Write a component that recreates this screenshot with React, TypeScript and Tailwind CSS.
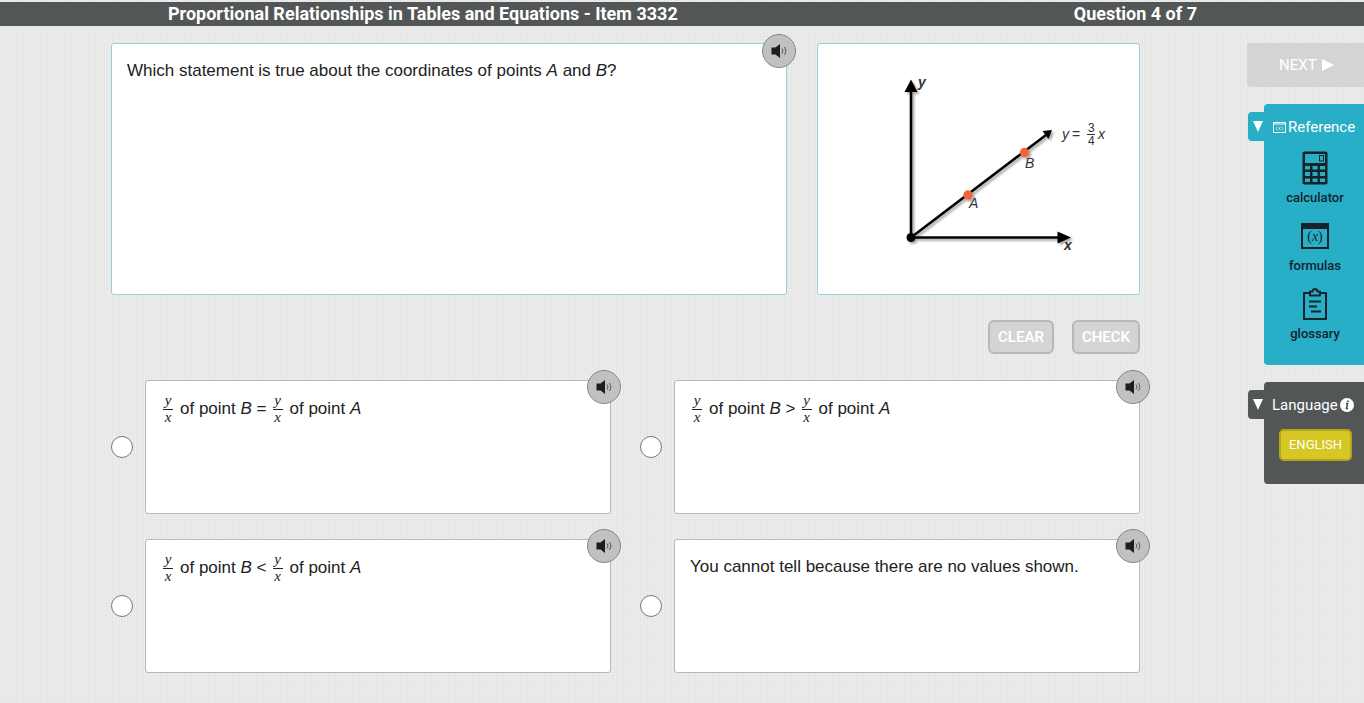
import type { ReactNode } from "react";

const uiFont = "font-['Roboto','Open_Sans',sans-serif]";

function SpeakerButton({ label, place }: { label: string; place: string }) {
  return (
    <button
      type="button"
      aria-label={label}
      className={`absolute flex size-[34px] items-center justify-center rounded-full border border-[#858788] bg-[#bfc1c2] ${place}`}
    >
      <svg viewBox="0 0 18 16" className="h-4 w-[18px]" aria-hidden="true">
        <path d="M1.500 4.500h4L10 1v14L5.500 11.500h-4z" fill="#1d1d1f" />
        <path d="M12 5.500q2 2.500 0 5M14.500 4q3 4 0 8" fill="none" stroke="#55585c" strokeWidth="1" />
      </svg>
    </button>
  );
}

function Fraction() {
  return (
    <span className="mr-[7px] inline-flex w-[10px] flex-col items-center align-middle font-['Liberation_Serif',serif] text-[15px] leading-[13px] italic">
      <span className="w-full border-b border-[#222] pb-[2px] text-center">y</span>
      <span className="pt-px">x</span>
    </span>
  );
}

function Comparison({ sign }: { sign: string }) {
  return (
    <>
      <Fraction />
      <span>
        of point <i>B</i> {sign}
      </span>
      <span className="w-[6px]" />
      <Fraction />
      <span>
        of point <i>A</i>
      </span>
    </>
  );
}

function Option({ id, children }: { id: string; children: ReactNode }) {
  return (
    <div className="flex items-center gap-3">
      <input
        id={id}
        type="radio"
        name="answer"
        className="size-[22px] shrink-0 appearance-none rounded-full border border-[#77797a] bg-white checked:border-[6px] checked:border-[#29aec7]"
      />
      <div className="relative min-h-[134px] flex-1 rounded-[3px] border border-[#b6b8b9] bg-white">
        <label htmlFor={id} className="flex min-h-[56px] items-center pl-[17px] text-[17px] leading-6">
          {children}
        </label>
        <SpeakerButton label="Read answer aloud" place="-top-[11px] -right-[11px]" />
      </div>
    </div>
  );
}

function Graph() {
  return (
    <svg viewBox="818 44 321 250" className="w-full" role="img" aria-label="Line through points A and B">
      <defs>
        <filter id="shadow" x="-20%" y="-20%" width="150%" height="150%">
          <feDropShadow dx="2" dy="2" stdDeviation="1.200" floodColor="#000" floodOpacity="0.35" />
        </filter>
      </defs>
      <g filter="url(#shadow)">
        <g stroke="#000" strokeWidth="2.600" fill="none">
          <path d="M911 90V237.500H1060M911 237.500L1046 135" />
        </g>
        <path d="M911 79.500l6.500 12.500h-13zM1071 237.500l-13.500 -6v12zM1052 130l-9.500 1 6 8z" />
        <circle cx="911" cy="237.500" r="4.500" />
        <circle cx="968" cy="195" r="4.700" fill="#f0643c" />
        <circle cx="1024.500" cy="152.500" r="4.700" fill="#f0643c" />
      </g>
      <g fill="#333" fontFamily="Liberation Sans, sans-serif" fontSize="14">
        <g fontStyle="italic">
          <text x="918" y="87" fontWeight="bold">y</text>
          <text x="1064" y="250" fontWeight="bold">x</text>
          <text x="969" y="208">A</text>
          <text x="1025" y="168">B</text>
          <text x="1062" y="139">y</text>
          <text x="1098" y="139">x</text>
        </g>
        <text x="1072" y="139">=</text>
        <text x="1088" y="132" fontSize="12">3</text>
        <text x="1088" y="145" fontSize="12">4</text>
        <path d="M1087 134.500h8" stroke="#333" strokeWidth="1" />
      </g>
    </svg>
  );
}

function CalculatorIcon() {
  return (
    <svg viewBox="0 0 26 34" className="h-[34px] w-[26px]" aria-hidden="true">
      <rect x="0.500" y="0.500" width="25" height="33" rx="2" fill="#16242a" />
      <g fill="#29aec7">
        <path d="M3 3h20v9H3z" />
        <path d="M3 15h5v3.500H3zM10.500 15h5v3.500h-5zM18 15h5v3.500h-5zM3 21h5v4H3zM10.500 21h5v4h-5zM18 21h5v4h-5zM3 27.500h5v3.500H3zM10.500 27.500h5v3.500h-5zM18 27.500h5v3.500h-5z" />
      </g>
      <rect x="17.500" y="4.500" width="4" height="5.500" fill="none" stroke="#16242a" />
    </svg>
  );
}

function FormulaIcon() {
  return (
    <svg viewBox="0 0 28 26" className="h-[26px] w-7" aria-hidden="true">
      <path d="M1 1h26v24H1z" fill="none" stroke="#16242a" strokeWidth="2" />
      <path d="M0 0h28v6H0z" fill="#16242a" />
      <text x="14" y="18" textAnchor="middle" fontFamily="Liberation Serif, serif" fontSize="14" fill="#16242a">
        (<tspan fontStyle="italic">x</tspan>)
      </text>
    </svg>
  );
}

function ClipboardIcon() {
  return (
    <svg viewBox="0 0 24 32" className="h-8 w-6" aria-hidden="true">
      <g fill="none" stroke="#16242a" strokeWidth="2">
        <path d="M6 5H1V31H23V5H18" strokeLinejoin="round" />
        <path d="M7 3.500h2.500Q10 1 12 1t2.500 2.500H17v4H7z" strokeLinejoin="round" />
        <path d="M6 13.500h12M6 18.500h8M8 23.500h10" />
      </g>
    </svg>
  );
}

function Tool({ label, children }: { label: string; children: ReactNode }) {
  return (
    <button type="button" className="flex h-[68px] flex-col items-center justify-between text-[#10242b]">
      <span className="flex h-[34px] items-center">{children}</span>
      <span className="pb-[13px] text-[13px] leading-4 font-medium">{label}</span>
    </button>
  );
}

function CollapseButton({ label, color }: { label: string; color: string }) {
  return (
    <button
      type="button"
      aria-label={label}
      className={`mt-2 flex h-[29px] w-4 shrink-0 items-center justify-center rounded-l-[4px] pl-1 ${color}`}
    >
      <svg viewBox="0 0 10 11" className="h-[11px] w-[10px]" aria-hidden="true">
        <path d="M0 0h10L5 11z" fill="#fff" />
      </svg>
    </button>
  );
}

const actionClass =
  "h-[34px] rounded-[6px] border-2 border-[#b7b9b9] bg-[#d3d5d5] text-center text-[15px] font-semibold text-white";

export default function App() {
  return (
    <div className="min-h-screen bg-[#e8e8e8] bg-[repeating-linear-gradient(90deg,rgba(255,255,255,0.25)_0px,rgba(255,255,255,0.25)_1px,transparent_1px,transparent_3px),repeating-linear-gradient(0deg,rgba(0,0,0,0.012)_0px,rgba(0,0,0,0.012)_1px,transparent_1px,transparent_3px)] pt-[2px] font-['Liberation_Sans',sans-serif] text-[#222]">
      <header
        className={`flex h-6 items-center justify-between bg-[#535657] pr-[167px] pl-[168px] text-[18px] leading-6 font-bold text-white ${uiFont}`}
      >
        <h1>Proportional Relationships in Tables and Equations - Item 3332</h1>
        <p>Question 4 of 7</p>
      </header>

      <div className="flex gap-[107px] pt-[17px] pl-[111px]">
        <main className="flex-1">
          <div className="grid grid-cols-[676fr_323fr] gap-[30px]">
            <section className="relative min-h-[252px] rounded-[3px] border border-[#8fd3dc] bg-white px-[15px] pt-[15px]">
              <p className="text-[17px] leading-6">
                Which statement is true about the coordinates of points <i>A</i> and <i>B</i>?
              </p>
              <SpeakerButton label="Read question aloud" place="-top-[10px] -right-[10px]" />
            </section>
            <section className="rounded-[3px] border border-[#8fd3dc] bg-white">
              <Graph />
            </section>
          </div>

          <div className={`mt-[25px] flex justify-end gap-[18px] ${uiFont}`}>
            <button type="button" className={`w-[66px] ${actionClass}`}>CLEAR</button>
            <button type="button" className={`w-[68px] ${actionClass}`}>CHECK</button>
          </div>

          <form className="mt-[26px] grid grid-cols-2 gap-x-[29px] gap-y-[25px]">
            <Option id="answer-1"><Comparison sign="=" /></Option>
            <Option id="answer-2"><Comparison sign=">" /></Option>
            <Option id="answer-3"><Comparison sign="<" /></Option>
            <Option id="answer-4"><span className="-ml-[2px] pb-[2px]">You cannot tell because there are no values shown.</span></Option>
          </form>
        </main>

        <aside className={`w-[117px] shrink-0 ${uiFont}`}>
          <button
            type="button"
            className="flex h-11 w-full items-center gap-[5px] rounded-l-[4px] bg-[#d3d5d5] pl-8 text-[15px] text-white"
          >
            NEXT
            <svg viewBox="0 0 12 12" className="size-3" aria-hidden="true">
              <path d="M0 0l12 6L0 12z" fill="#fff" />
            </svg>
          </button>

          <section className="mt-[17px] flex items-start pl-px">
            <CollapseButton label="Collapse reference" color="bg-[#29aec7]" />
            <div className="flex h-[261px] flex-1 flex-col rounded-l-[4px] bg-[#29aec7] pt-3">
              <h2 className="flex items-center gap-[2px] pl-[9px] text-[15px] leading-[22px] text-white">
                <svg viewBox="0 0 13 11" className="h-[11px] w-[13px] shrink-0" aria-hidden="true">
                  <path d="M.5.5h12v10H.5zM.5 2h12" fill="none" stroke="#fff" />
                  <path d="M4 4.500q-1.500 2 0 4M9 4.500q1.500 2 0 4M5.500 5l2 3M7.500 5l-2 3" fill="none" stroke="#fff" strokeWidth=".6" />
                </svg>
                Reference
              </h2>
              <div className="flex flex-col items-center pt-[13px] pl-[2px]">
                <Tool label="calculator"><CalculatorIcon /></Tool>
                <Tool label="formulas"><FormulaIcon /></Tool>
                <Tool label="glossary"><ClipboardIcon /></Tool>
              </div>
            </div>
          </section>

          <section className="mt-[17px] flex items-start pl-px">
            <CollapseButton label="Collapse language" color="bg-[#535657]" />
            <div className="h-[102px] flex-1 rounded-l-[4px] bg-[#535657] pt-3">
              <h2 className="flex items-center gap-[2px] pl-2 text-[15px] leading-[22px] text-white">
                Language
                <svg viewBox="0 0 14 14" className="size-[14px] shrink-0" aria-hidden="true">
                  <circle cx="7" cy="7" r="7" fill="#fff" />
                  <path d="M6 5.500h1.500L6.500 10.500h1.500M7.200 3.200h1.600" fill="none" stroke="#444" strokeWidth="1.500" />
                </svg>
              </h2>
              <button
                type="button"
                className="mt-[13px] ml-[15px] h-8 w-[73px] rounded-[5px] border-2 border-[#b3a51b] bg-[#d6c724] text-[13px] text-white"
              >
                ENGLISH
              </button>
            </div>
          </section>
        </aside>
      </div>
    </div>
  );
}
